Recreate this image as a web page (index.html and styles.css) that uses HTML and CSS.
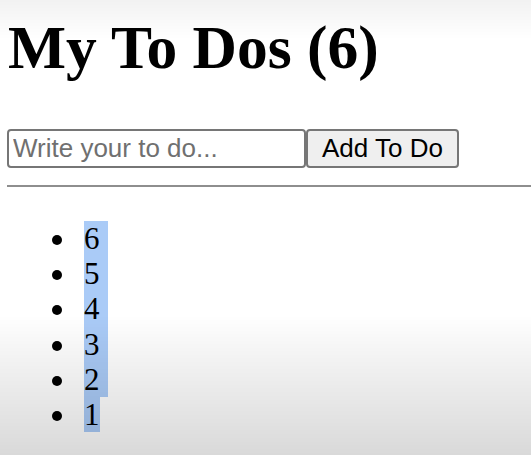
FILE: index.html
```html
<!DOCTYPE html>
<html lang="en">
<head>
<meta charset="utf-8">
<title>My To Dos</title>
<link rel="stylesheet" href="styles.css">
</head>
<body>
<main class="page">
  <h1 class="title">My To Dos (6)</h1>
  <form class="todo-form">
    <input class="todo-input" type="text" placeholder="Write your to do...">
    <button class="todo-button" type="button">Add To Do</button>
  </form>
  <hr class="divider">
  <ul class="todo-list">
    <li class="todo-item"><span class="sel sel-line">6</span></li>
    <li class="todo-item"><span class="sel sel-line">5</span></li>
    <li class="todo-item"><span class="sel sel-line">4</span></li>
    <li class="todo-item"><span class="sel sel-line">3</span></li>
    <li class="todo-item"><span class="sel sel-line">2</span></li>
    <li class="todo-item"><span class="sel">1</span></li>
  </ul>
</main>
<div class="shade"></div>
</body>
</html>
```

FILE: styles.css
```css
html, body {
  margin: 0;
  padding: 0;
  height: 100%;
  overflow: hidden;
}

body {
  background: #ffffff;
  font-family: "Liberation Serif", "Times New Roman", serif;
  color: #000;
}

.page {
  padding: 14px 0 0 7px;
}

.title {
  margin: 0 0 48px 1px;
  font-family: "Liberation Serif", serif;
  font-weight: bold;
  font-size: 61.5px;
  line-height: 67px;
}

.todo-form {
  display: flex;
  height: 39px;
}

.todo-input {
  box-sizing: border-box;
  width: 299px;
  height: 39px;
  margin: 0;
  padding: 0 4px;
  border: 2px solid #767676;
  border-radius: 4px;
  background: #fff;
  font-family: "Liberation Sans", Arial, sans-serif;
  font-size: 26px;
  color: #000;
}

.todo-input::placeholder {
  color: #707070;
}

.todo-button {
  box-sizing: border-box;
  width: 153px;
  height: 39px;
  margin: 0;
  padding: 0;
  border: 2px solid #767676;
  border-radius: 4px;
  background: #efefef;
  font-family: "Liberation Sans", Arial, sans-serif;
  font-size: 26px;
  color: #000;
}

.divider {
  margin: 17px 0 0 0;
  border: 0;
  border-top: 2px solid #8e8e8e;
  height: 0;
}

.todo-list {
  margin: 34px 0 0 0;
  padding-left: 45px;
  font-size: 31px;
  line-height: 35.2px;
  list-style: none;
}

.todo-item {
  display: flex;
  align-items: center;
  gap: 22px;
  height: 35.2px;
}

.todo-item::before {
  content: "";
  width: 10px;
  height: 10px;
  margin-top: 3px;
  border-radius: 50%;
  background: #000;
  flex: none;
}

.sel {
  display: inline-block;
  height: 35.2px;
  background: #aacbf7;
}

.sel-line {
  padding-right: 8px;
}

.shade {
  position: fixed;
  inset: 0;
  pointer-events: none;
  background: linear-gradient(to bottom,
    rgba(0, 0, 0, 0.05) 0px,
    rgba(0, 0, 0, 0.0) 40px,
    rgba(0, 0, 0, 0.0) 315px,
    rgba(0, 0, 0, 0.05) 360px,
    rgba(0, 0, 0, 0.15) 455px);
}
```
